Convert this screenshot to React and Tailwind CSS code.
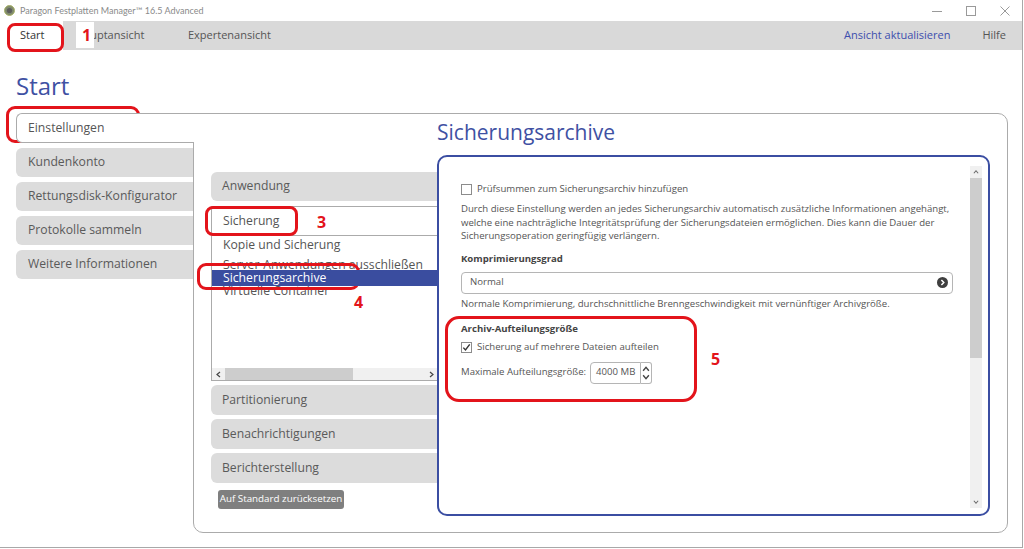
import React from 'react';

function Chk({ checked }) {
  return (
    <span className="w-[11px] h-[11px] border border-[#8c8c8c] bg-white flex items-center justify-center shrink-0">
      {checked && (
        <svg width="9" height="9" viewBox="0 0 9 9">
          <path d="M1.3 4.6 L3.5 7 L7.7 1.4" fill="none" stroke="#333" strokeWidth="1.4" />
        </svg>
      )}
    </span>
  );
}

function Chevron({ dir, size = 7, color = '#555' }) {
  const d = {
    up: 'M1 5 L3.5 2 L6 5',
    down: 'M1 2 L3.5 5 L6 2',
    left: 'M5 1 L2 3.5 L5 6',
    right: 'M2 1 L5 3.5 L2 6',
  }[dir];
  return (
    <svg width={size} height={size} viewBox="0 0 7 7">
      <path d={d} fill="none" stroke={color} strokeWidth="1.2" />
    </svg>
  );
}

function SideItem({ label }) {
  return (
    <div className="h-[29px] bg-[#dcdcdc] rounded-l-[6px] flex items-center pl-[12px] text-[12.2px] text-[#5a5a5a]">
      {label}
    </div>
  );
}

function MidItem({ label }) {
  return (
    <div className="h-[30px] bg-[#dcdcdc] rounded-l-[6px] flex items-center pl-[11px] text-[12.2px] text-[#5a5a5a]">
      {label}
    </div>
  );
}

function Mark({ cls }) {
  return <div className={`absolute border-[3px] border-[#e3141b] ${cls}`} />;
}

function Num({ n, cls }) {
  return (
    <div className={`absolute text-[16px] leading-[16px] font-bold text-[#e3141b] ${cls}`}>{n}</div>
  );
}

export default function App() {
  return (
    <div className="w-[1024px] h-[549px] relative overflow-hidden bg-white font-['Open_Sans',sans-serif]">
      <div className="w-[1023px] h-[548px] border-r border-b border-[#a8a8a8] flex flex-col">
        {/* title bar */}
        <div className="h-[21px] flex items-center pl-[4px] shrink-0">
          <svg width="11" height="11" viewBox="0 0 11 11">
            <circle cx="5.5" cy="5.5" r="5" fill="#7f8a6c" stroke="#a9b36a" strokeWidth="1" />
            <circle cx="5.5" cy="5.5" r="2.6" fill="#5c5c5c" />
          </svg>
          <span className="ml-[5px] text-[9px] text-[#8a8a8a] font-['Lato',sans-serif]">Paragon Festplatten Manager™ 16.5 Advanced</span>
          <div className="ml-auto flex items-center gap-[24px] pr-[12px]">
            <svg width="10" height="10" viewBox="0 0 10 10">
              <path d="M0 5.5 H10" stroke="#9a9a9a" strokeWidth="1" />
            </svg>
            <svg width="10" height="10" viewBox="0 0 10 10">
              <rect x="0.5" y="0.5" width="9" height="9" fill="none" stroke="#9a9a9a" strokeWidth="1" />
            </svg>
            <svg width="10" height="10" viewBox="0 0 10 10">
              <path d="M0.5 0.5 L9.5 9.5 M9.5 0.5 L0.5 9.5" stroke="#9a9a9a" strokeWidth="1" />
            </svg>
          </div>
        </div>

        {/* menu bar */}
        <div className="h-[29px] bg-[#d9d9d9] flex items-center text-[11px] text-[#555] shrink-0">
          <div className="w-[63px] h-full bg-white flex items-center pl-[20px] text-[#333]">Start</div>
          <div className="w-[112px] ml-[13px]">Hauptansicht</div>
          <div>Expertenansicht</div>
          <div className="ml-auto text-[#3d4eae]">Ansicht aktualisieren</div>
          <div className="ml-[32px] mr-[16px]">Hilfe</div>
        </div>

        {/* main */}
        <div className="flex-1 pl-[16px]">
          <div className="pt-[24px] text-[24px] leading-[24px] text-[#3f51a3]">Start</div>

          <div className="flex mt-[15px]">
            {/* left nav */}
            <div className="w-[177px] flex flex-col gap-[5px]">
              <div className="w-[178px] h-[30px] bg-white border border-r-0 border-[#ababab] rounded-l-[6px] flex items-center pl-[11px] text-[12.2px] text-[#555] relative z-10">
                Einstellungen
              </div>
              <SideItem label="Kundenkonto" />
              <SideItem label="Rettungsdisk-Konfigurator" />
              <SideItem label="Protokolle sammeln" />
              <SideItem label="Weitere Informationen" />
            </div>

            {/* panel */}
            <div className="w-[815px] h-[420px] border border-[#ababab] rounded-tr-[10px] rounded-b-[10px] flex pl-[17px]">
              {/* middle column */}
              <div className="w-[226px] pt-[58px] flex flex-col shrink-0">
                <div className="h-[29px] bg-[#dcdcdc] rounded-l-[6px] flex items-center pl-[11px] text-[12.2px] text-[#5a5a5a]">
                  Anwendung
                </div>
                <div className="mt-[5px] border border-r-0 border-[#ababab] flex flex-col">
                  <div className="h-[29px] border-b border-[#ababab] flex items-center pl-[11px] text-[12.2px] text-[#555]">
                    Sicherung
                  </div>
                  <div className="h-[144px] flex flex-col text-[12.2px] text-[#555]">
                    <div className="h-[17px] leading-[17px] pl-[11px] whitespace-nowrap">Kopie und Sicherung</div>
                    <div className="h-[17px] leading-[17px] pt-[3px] pl-[11px] whitespace-nowrap">Server-Anwendungen ausschließen</div>
                    <div className="h-[16px] leading-[16px] pl-[11px] bg-[#3a4d9f] text-white relative z-10 whitespace-nowrap">
                      Sicherungsarchive
                    </div>
                    <div className="h-[17px] leading-[17px] -mt-[4px] pl-[11px] whitespace-nowrap">Virtuelle Container</div>
                    <div className="mt-auto h-[12px] bg-[#f0f0f0] flex items-center">
                      <div className="w-[12px] flex justify-center"><Chevron dir="left" color="#444" /></div>
                      <div className="w-[128px] h-full bg-[#cdcdcd] ml-[1px]" />
                      <div className="ml-auto w-[12px] flex justify-center"><Chevron dir="right" color="#444" /></div>
                    </div>
                  </div>
                </div>
                <div className="mt-[4px] flex flex-col gap-[4px]">
                  <MidItem label="Partitionierung" />
                  <MidItem label="Benachrichtigungen" />
                  <MidItem label="Berichterstellung" />
                </div>
                <div className="mt-[7px] ml-[7px] w-[126px] h-[19px] bg-[#7f7f7f] rounded-[3px] flex items-center justify-center text-[9.8px] text-white">
                  Auf Standard zurücksetzen
                </div>
              </div>

              {/* right column */}
              <div className="flex-1 flex flex-col pr-[17px] pb-[16px]">
                <div className="h-[41px] pt-[4px] text-[21px] leading-[28px] text-[#3f51a3] shrink-0">Sicherungsarchive</div>
                <div className="flex-1 border-2 border-[#3b4ea2] rounded-[10px] flex bg-white">
                  <div className="flex-1 pl-[22px] pt-[24px] text-[9.6px] text-[#555]">
                    <div className="h-[16px] flex items-center gap-[5px]">
                      <Chk />
                      <span>Prüfsummen zum Sicherungsarchiv hinzufügen</span>
                    </div>
                    <div className="mt-[5px] leading-[13.5px] whitespace-nowrap">
                      Durch diese Einstellung werden an jedes Sicherungsarchiv automatisch zusätzliche Informationen angehängt,
                      <br />
                      welche eine nachträgliche Integritätsprüfung der Sicherungsdateien ermöglichen. Dies kann die Dauer der
                      <br />
                      Sicherungsoperation geringfügig verlängern.
                    </div>
                    <div className="mt-[9px] h-[14px] leading-[14px] font-bold text-[#444]">Komprimierungsgrad</div>
                    <div className="mt-[6px] w-[492px] h-[22px] border border-[#b5b5b5] rounded-[4px] flex items-center pl-[8px] pr-[4px]">
                      <span>Normal</span>
                      <svg className="ml-auto" width="11" height="11" viewBox="0 0 11 11">
                        <circle cx="5.5" cy="5.5" r="5.5" fill="#3f3f3f" />
                        <path d="M4.4 3 L6.8 5.5 L4.4 8" fill="none" stroke="#fff" strokeWidth="1.5" />
                      </svg>
                    </div>
                    <div className="mt-[3px] h-[14px] leading-[14px]">
                      Normale Komprimierung, durchschnittliche Brenngeschwindigkeit mit vernünftiger Archivgröße.
                    </div>
                    <div className="mt-[11px] h-[14px] leading-[14px] font-bold text-[#444]">Archiv-Aufteilungsgröße</div>
                    <div className="mt-[4px] h-[16px] flex items-center gap-[5px]">
                      <Chk checked />
                      <span>Sicherung auf mehrere Dateien aufteilen</span>
                    </div>
                    <div className="mt-[6px] h-[22px] flex items-center">
                      <span>Maximale Aufteilungsgröße:</span>
                      <div className="ml-[4px] w-[51px] h-[22px] border border-[#b5b5b5] rounded-l-[4px] flex items-center pl-[5px]">
                        4000 MB
                      </div>
                      <div className="w-[11px] h-[22px] border border-l-0 border-[#b5b5b5] rounded-r-[3px] flex flex-col items-center justify-center">
                        <Chevron dir="up" size={8} color="#444" />
                        <Chevron dir="down" size={8} color="#444" />
                      </div>
                    </div>
                  </div>
                  <div className="w-[12px] mt-[9px] mb-[6px] mr-[6px] bg-[#f0f0f0] flex flex-col">
                    <div className="h-[12px] flex items-center justify-center"><Chevron dir="up" size={6} color="#666" /></div>
                    <div className="h-[180px] bg-[#cdcdcd]" />
                    <div className="mt-auto h-[12px] flex items-center justify-center"><Chevron dir="down" size={6} color="#666" /></div>
                  </div>
                </div>
              </div>
            </div>
          </div>
        </div>
      </div>

      {/* annotations */}
      <Mark cls="left-[7px] top-[23px] w-[57px] h-[29px] rounded-[8px]" />
      <div className="absolute left-[76px] top-[22px] w-[18px] h-[26px] bg-white" />
      <Num n="1" cls="left-[82px] top-[27px]" />
      <Mark cls="left-[6px] top-[106px] w-[134px] h-[37px] rounded-[9px]" />
      <Num n="2" cls="left-[112px] top-[122px]" />
      <Mark cls="left-[205px] top-[206px] w-[93px] h-[30px] rounded-[8px]" />
      <Num n="3" cls="left-[317px] top-[214px]" />
      <Mark cls="left-[197px] top-[263px] w-[163px] h-[27px] rounded-[9px]" />
      <Num n="4" cls="left-[354px] top-[294px]" />
      <Mark cls="left-[445px] top-[316px] w-[252px] h-[86px] rounded-[14px]" />
      <Num n="5" cls="left-[711px] top-[351px]" />
    </div>
  );
}
